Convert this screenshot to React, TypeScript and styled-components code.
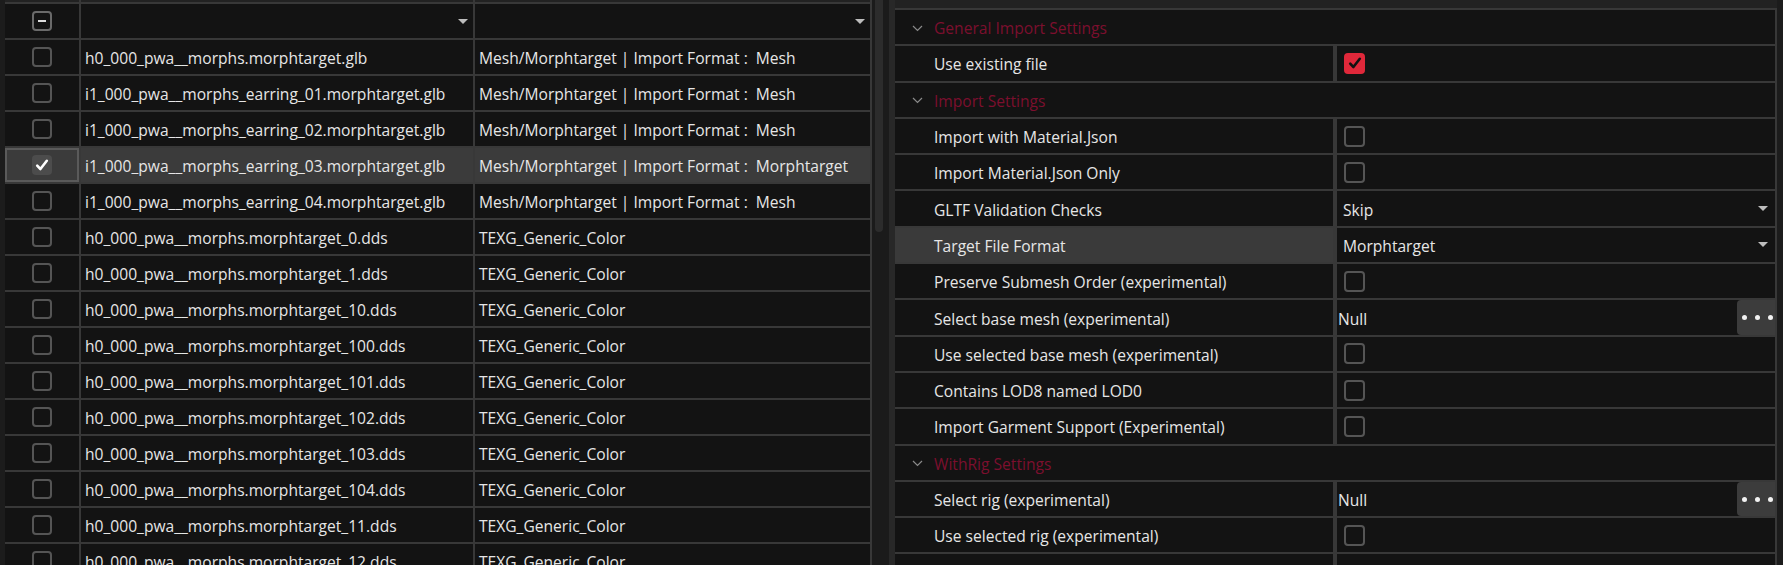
import React from 'react';
import styled, { createGlobalStyle } from 'styled-components';

const Global = createGlobalStyle`
  html, body { margin: 0; padding: 0; background: #1c1c1c; }
  body {
    font-family: "Open Sans", "Noto Sans", sans-serif;
    font-size: 15.6px;
    color: #e6e6e6;
    overflow: hidden;
  }
`;

const LINE = '#383838';
const CELL = '#131313';
const PROP_H = 34.3;

const Page = styled.div`
  display: flex;
  width: 1783px;
  height: 565px;
  overflow: hidden;
  background: #1c1c1c;
`;

/* ---------- left file grid ---------- */
const LeftPane = styled.div`
  flex: none;
  width: 867px;
  padding-left: 5px;
  overflow: hidden;
`;

const Table = styled.div`
  display: flex;
  flex-direction: column;
  gap: 2px;
  background: ${LINE};
  padding-right: 2px;
`;

const GridRow = styled.div<{ $h?: number }>`
  display: grid;
  grid-template-columns: 74px 392px 395px;
  gap: 2px;
  height: ${(p) => p.$h ?? 34}px;
  flex: none;
`;

const Cell = styled.div<{ $sel?: boolean; $strip?: boolean; $focus?: boolean }>`
  display: flex;
  align-items: center;
  padding: 2px 5px 0 4px;
  background: ${(p) => (p.$strip ? '#222' : p.$sel ? '#3b3b3b' : CELL)};
  white-space: pre;
  overflow: hidden;
  position: relative;
  box-shadow: ${(p) => (p.$focus ? 'inset 0 0 0 2px #5a5a5a' : 'none')};
`;

const CheckCell = styled(Cell)`
  justify-content: center;
  padding: 0;
`;

const FilterCell = styled(Cell)`
  justify-content: flex-end;
  padding: 0 5px 0 0;
`;

const Box = styled.div<{ $checked?: boolean; $red?: boolean; $size?: number }>`
  width: ${(p) => p.$size ?? 20}px;
  height: ${(p) => p.$size ?? 20}px;
  box-sizing: border-box;
  border-radius: 4px;
  border: ${(p) => (p.$checked ? 'none' : '2px solid #555')};
  background: ${(p) => (p.$red ? '#e0283a' : p.$checked ? '#4c4c4c' : 'transparent')};
  display: flex;
  align-items: center;
  justify-content: center;
  flex: none;
`;

const IndBox = styled(Box)`
  border-color: #6a6a6a;
`;

const Dash = styled.div`
  width: 8px;
  height: 2px;
  background: #dcdcdc;
`;

const Tri = styled.div`
  width: 0;
  height: 0;
  border-left: 5px solid transparent;
  border-right: 5px solid transparent;
  border-top: 5px solid #bdbdbd;
`;

const Check = ({ color }: { color: string }) => (
  <svg width="14" height="14" viewBox="0 0 14 14">
    <path d="M2.2 7.6 L5.4 11 L11.8 2.8" fill="none" stroke={color} strokeWidth="2.6" strokeLinecap="round" strokeLinejoin="round" />
  </svg>
);

/* ---------- gutter ---------- */
const Gutter = styled.div`
  flex: none;
  width: 23px;
  display: flex;
  background: #1b1b1b;
  padding-left: 3px;
  box-sizing: border-box;
`;

const Track = styled.div`
  width: 8px;
  flex: none;
`;

const Thumb = styled.div`
  height: 232px;
  background: #2c2c2c;
  border-radius: 0 0 4px 4px;
`;

const Splitter = styled.div`
  margin-left: auto;
  width: 6px;
  background: #282828;
`;

/* ---------- right property grid ---------- */
const RightPane = styled.div`
  flex: none;
  width: 888px;
  display: flex;
  flex-direction: column;
`;

const TopStrip = styled.div`
  height: 8px;
  background: #222;
  flex: none;
  border-right: 6px solid #1c1c1c;
  box-sizing: content-box;
  width: 882px;
`;

const Props = styled.div`
  width: 880px;
  display: flex;
  flex-direction: column;
  gap: 2px;
  padding: 2px 2px 0 0;
  background: ${LINE};
  height: 100%;
`;

const SectionRow = styled.div`
  height: ${PROP_H}px;
  flex: none;
  background: ${CELL};
  display: flex;
  align-items: center;
  padding: 2px 0 0 17px;
  box-sizing: border-box;
  gap: 11px;
  color: #7c0f2e;
  white-space: nowrap;
`;

const PropRow = styled.div`
  height: ${PROP_H}px;
  flex: none;
  display: grid;
  grid-template-columns: 438px 438px;
  gap: 4px;
`;

const Label = styled.div<{ $hl?: boolean }>`
  background: ${(p) => (p.$hl ? '#3a3a3a' : CELL)};
  display: flex;
  align-items: center;
  padding: 2px 0 0 39px;
  white-space: nowrap;
`;

const Value = styled.div<{ $pad?: number }>`
  background: ${CELL};
  display: flex;
  align-items: center;
  padding-left: ${(p) => p.$pad ?? 7}px;
  white-space: nowrap;
`;

const ValueText = styled.span`
  flex: 1;
  padding-top: 2px;
`;

const DropArrow = styled(Tri)`
  margin-right: 7px;
`;

const DotsButton = styled.div`
  width: 36px;
  align-self: stretch;
  background: #3c3c3c;
  border-radius: 4px 0 0 4px;
  display: flex;
  align-items: center;
  justify-content: center;
  gap: 8px;
  padding-left: 2px;
`;

const Dot = styled.span`
  width: 5px;
  height: 5px;
  border-radius: 50%;
  background: #f2f2f2;
`;

const Chevron = () => (
  <svg width="11" height="7" viewBox="0 0 11 7">
    <path d="M1 1 L5.5 5.5 L10 1" fill="none" stroke="#8a8a8a" strokeWidth="1.2" />
  </svg>
);

type FileRow = { name: string; type: string; checked?: boolean };

const files: FileRow[] = [
  { name: 'h0_000_pwa__morphs.morphtarget.glb', type: 'Mesh/Morphtarget | Import Format :  Mesh' },
  { name: 'i1_000_pwa__morphs_earring_01.morphtarget.glb', type: 'Mesh/Morphtarget | Import Format :  Mesh' },
  { name: 'i1_000_pwa__morphs_earring_02.morphtarget.glb', type: 'Mesh/Morphtarget | Import Format :  Mesh' },
  { name: 'i1_000_pwa__morphs_earring_03.morphtarget.glb', type: 'Mesh/Morphtarget | Import Format :  Morphtarget', checked: true },
  { name: 'i1_000_pwa__morphs_earring_04.morphtarget.glb', type: 'Mesh/Morphtarget | Import Format :  Mesh' },
  ...['0', '1', '10', '100', '101', '102', '103', '104', '11', '12'].map((n) => ({
    name: `h0_000_pwa__morphs.morphtarget_${n}.dds`,
    type: 'TEXG_Generic_Color',
  })),
];

type Prop =
  | { kind: 'section'; title: string }
  | { kind: 'check'; label: string; checked?: boolean }
  | { kind: 'select'; label: string; value: string; hl?: boolean }
  | { kind: 'ref'; label: string; value: string };

const props: Prop[] = [
  { kind: 'section', title: 'General Import Settings' },
  { kind: 'check', label: 'Use existing file', checked: true },
  { kind: 'section', title: 'Import Settings' },
  { kind: 'check', label: 'Import with Material.Json' },
  { kind: 'check', label: 'Import Material.Json Only' },
  { kind: 'select', label: 'GLTF Validation Checks', value: 'Skip' },
  { kind: 'select', label: 'Target File Format', value: 'Morphtarget', hl: true },
  { kind: 'check', label: 'Preserve Submesh Order (experimental)' },
  { kind: 'ref', label: 'Select base mesh (experimental)', value: 'Null' },
  { kind: 'check', label: 'Use selected base mesh (experimental)' },
  { kind: 'check', label: 'Contains LOD8 named LOD0' },
  { kind: 'check', label: 'Import Garment Support (Experimental)' },
  { kind: 'section', title: 'WithRig Settings' },
  { kind: 'ref', label: 'Select rig (experimental)', value: 'Null' },
  { kind: 'check', label: 'Use selected rig (experimental)' },
];

const renderProp = (p: Prop, i: number) => {
  if (p.kind === 'section') {
    return (
      <SectionRow key={i}>
        <Chevron />
        <span>{p.title}</span>
      </SectionRow>
    );
  }
  if (p.kind === 'check') {
    return (
      <PropRow key={i}>
        <Label>{p.label}</Label>
        <Value>
          <Box $size={21} $checked={p.checked} $red={p.checked}>
            {p.checked && <Check color="#111" />}
          </Box>
        </Value>
      </PropRow>
    );
  }
  if (p.kind === 'select') {
    return (
      <PropRow key={i}>
        <Label $hl={p.hl}>{p.label}</Label>
        <Value $pad={6}>
          <ValueText>{p.value}</ValueText>
          <DropArrow />
        </Value>
      </PropRow>
    );
  }
  return (
    <PropRow key={i}>
      <Label>{p.label}</Label>
      <Value $pad={1}>
        <ValueText>{p.value}</ValueText>
        <DotsButton>
          <Dot />
          <Dot />
          <Dot />
        </DotsButton>
      </Value>
    </PropRow>
  );
};

export default function App() {
  return (
    <>
      <Global />
      <Page>
        <LeftPane>
          <Table>
            <GridRow $h={2}>
              <Cell $strip />
              <Cell $strip />
              <Cell $strip />
            </GridRow>
            <GridRow>
              <CheckCell>
                <IndBox>
                  <Dash />
                </IndBox>
              </CheckCell>
              <FilterCell>
                <Tri />
              </FilterCell>
              <FilterCell>
                <Tri />
              </FilterCell>
            </GridRow>
            {files.map((f, i) => (
              <GridRow key={i}>
                <CheckCell $sel={f.checked} $focus={f.checked}>
                  <Box $checked={f.checked}>{f.checked && <Check color="#fff" />}</Box>
                </CheckCell>
                <Cell $sel={f.checked}>{f.name}</Cell>
                <Cell $sel={f.checked}>{f.type}</Cell>
              </GridRow>
            ))}
          </Table>
        </LeftPane>
        <Gutter>
          <Track>
            <Thumb />
          </Track>
          <Splitter />
        </Gutter>
        <RightPane>
          <TopStrip />
          <Props>
            {props.map(renderProp)}
            <PropRow>
              <Label />
              <Value />
            </PropRow>
          </Props>
        </RightPane>
      </Page>
    </>
  );
}
